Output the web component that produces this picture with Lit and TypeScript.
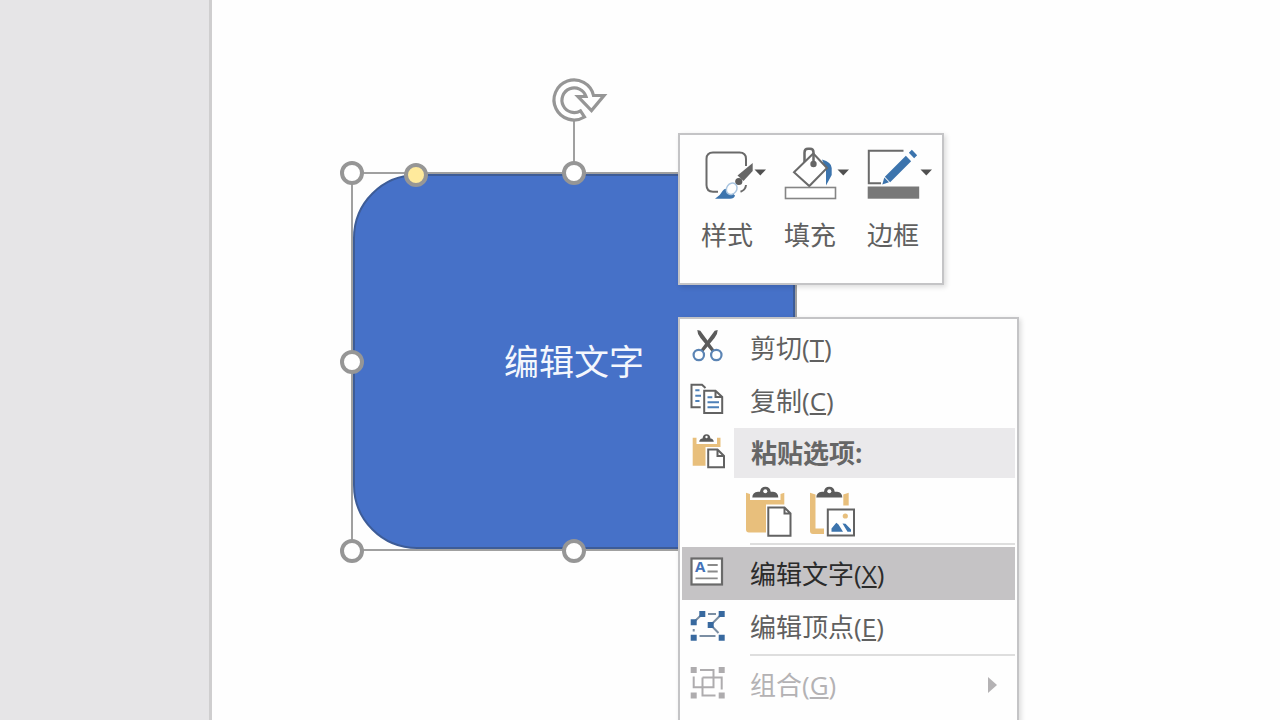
import { LitElement, html, css, svg } from "lit";
import { customElement } from "lit/decorators.js";

const caret = svg`<path d="M53.5 22.5H65L59.3 28.5Z" fill="#505050"/>`;

const styleIcon = html`<svg class="tool-icon" viewBox="0 0 66 54" aria-hidden="true">
  <g fill="none" stroke="#6a6a6a" stroke-width="2">
    <path d="M45 19V12Q45 5.500 38.500 5.500H12Q5.500 5.500 5.500 12V38Q5.500 44.700 12 44.700H17"/>
    <path d="M45 38Q44.500 43 39.500 44.700"/>
  </g>
  <path d="M51.700 16V24L42.500 34L36.500 28.500Z" fill="#666"/>
  <circle cx="37.800" cy="34.500" r="3.600" fill="#5c5c5c"/>
  <path d="M14 51.700Q19 49 21.500 44Q23.500 41 27 42L34 48.500Q33 51.700 29 51.700Z" fill="#3c74ad"/>
  <ellipse cx="30.700" cy="41.800" rx="5" ry="6" transform="rotate(35 30.700 41.800)" fill="#fff" stroke="#a9c5e0" stroke-width="1.500"/>
  ${caret}
</svg>`;

const fillIcon = html`<svg class="tool-icon" viewBox="0 0 66 54" aria-hidden="true">
  <path d="M38 12.500Q47.500 15 47.700 21V28L42 38.500V23Z" fill="#3c74ad"/>
  <path d="M10 25.300L29.300 6.500L43 21L25.300 39Z" fill="#fff" stroke="#6a6a6a" stroke-width="2"/>
  <path d="M20.500 15V5.500Q20.500 1.800 24 1.800H26Q29.500 1.800 29.500 5.500V16" fill="none" stroke="#6a6a6a" stroke-width="2.500"/>
  <circle cx="29.500" cy="17" r="3.200" fill="#666"/>
  <rect x="1.500" y="40.500" width="50" height="11" fill="#fff" stroke="#858585" stroke-width="1.600"/>
  ${caret}
</svg>`;

const borderIcon = html`<svg class="tool-icon" viewBox="0 0 66 54" aria-hidden="true">
  <path d="M36.500 3.700H1.800V36.200H14" fill="none" stroke="#6a6a6a" stroke-width="2"/>
  <rect x="0.700" y="39.500" width="51.500" height="12.200" fill="#787878"/>
  <path d="M15.300 37.500L17.300 30.500L22 35.200Z" fill="#3c74ad"/>
  <path d="M20.500 32.500L41.500 11.500M44.500 8.500L47.500 5.500" stroke="#3c74ad" stroke-width="7.500" fill="none"/>
  ${caret}
</svg>`;

const cutIcon = html`<svg class="icon" viewBox="0 0 36 36" aria-hidden="true">
  <g fill="#5b5b5b">
    <path d="M7.300 0Q7.300 4.500 10.500 8L22 22L24.500 20L10.300 0.800Z"/>
    <path d="M27.700 0Q27.700 4.500 24.500 8L13 22L10.500 20L24.700 0.800Z"/>
  </g>
  <g fill="#fff" stroke="#5b84b4" stroke-width="2.200"><circle cx="8.800" cy="25" r="5.200"/><circle cx="26.300" cy="25" r="5.200"/></g>
</svg>`;

const copyIcon = html`<svg class="icon" viewBox="0 0 36 36" aria-hidden="true">
  <g fill="none" stroke="#626262" stroke-width="2">
    <path d="M10.700 24.300H1.500V1.800H12L15.500 5"/>
    <path d="M14.200 7.800H25.500L32.200 14V30H14.200ZM25.500 7.800V14H32.200" fill="#fff"/>
  </g>
  <path d="M5.300 7.300H9.500M5.300 12.700H11M5.300 18H9.500M17.500 14.300H22.300M17.500 19.300H29M17.500 24.300H29" stroke="#4d80b8" stroke-width="2"/>
</svg>`;

const pasteIcon = html`<svg class="icon" viewBox="0 0 36 36" aria-hidden="true">
  <path d="M2.700 2.700H6.500V9H27V2.700H30.500V12H15.500V30.700H2.700Z" fill="#e8bf7c"/>
  <path d="M9.200 6.800Q9.500 3.800 12.500 3.500Q13 -0.800 16.500 -0.800Q20 -0.800 20.500 3.500Q23.500 3.800 23.800 6.800Z" fill="#5b5b5b"/>
  <circle cx="16.500" cy="2" r="1.200" fill="#fff"/>
  <path d="M18.200 14.500H27.500L34 21V32.300H18.200ZM27.500 14.500V21H34" fill="#fff" stroke="#626262" stroke-width="2"/>
</svg>`;

const clip = svg`
  <path d="M7.300 11.500Q7.300 6.200 13 5.700H15Q15.500 0.800 20.300 0.800Q25 0.800 25.700 5.700H28Q33.300 6.200 33.300 11.500Z" fill="#5b5b5b"/>
  <circle cx="20.300" cy="5.200" r="2" fill="#fff"/>`;

const pasteThemeIcon = html`<svg class="paste-icon" viewBox="0 0 48 52" aria-hidden="true">
  <path d="M1 6.700L5 8V14H35.500V8L39.300 6.700V18.500H21V46.500H4Q1 46.500 1 43.500Z" fill="#e8bf7c"/>
  ${clip}
  <path d="M23.300 21.500H39.500L45.500 27.500V49.800H23.300ZM39.500 21.500V27.500H45.500" fill="#fff" stroke="#626262" stroke-width="2"/>
</svg>`;

const pastePictureIcon = html`<svg class="paste-icon" viewBox="0 0 48 52" aria-hidden="true">
  <path d="M1 6.700L6.500 8.500V42.500H15V48H4Q1 48 1 45ZM34.300 8.500L39.700 6.700V19.500H34.300Z" fill="#e8bf7c"/>
  ${clip}
  <rect x="18.800" y="23.500" width="26.200" height="26" fill="#fff" stroke="#626262" stroke-width="2"/>
  <circle cx="36.300" cy="30" r="2.600" fill="#e8bf7c"/>
  <path d="M22.500 45.800V42.500L27.300 36.700L29.500 38.500L34 45.800ZM33.500 37.500L36.500 37.800L42 43.500V45.800H38.500Z" fill="#3c74ad"/>
</svg>`;

const editTextIcon = html`<svg class="icon" viewBox="0 0 36 36" aria-hidden="true">
  <rect x="1.500" y="2.500" width="30.500" height="26" fill="#fff" stroke="#6a6a6a" stroke-width="2.200"/>
  <text class="glyph" x="5" y="16">A</text>
  <path d="M17.500 9H27.700M17.500 15.500H27.700M5.500 22.300H27.700" stroke="#8a8a8a" stroke-width="1.800"/>
</svg>`;

const pointsIcon = html`<svg class="icon" viewBox="0 0 36 36" aria-hidden="true">
  <path d="M12.300 5L3.700 13.300M18 5H26M31.700 5L20.700 16L28.500 24M9.500 27H25.500M3.700 20V22.500" stroke="#7b8ea3" stroke-width="2" fill="none"/>
  <path d="M9.300 2h6v6h-6zM28.700 2h6v6h-6zM0.700 10.300h6v6h-6zM17.700 13h6v6h-6zM0.700 25.700h6v6h-6zM28.700 25.700h6v6h-6z" fill="#38699f"/>
</svg>`;

const groupIcon = html`<svg class="icon" viewBox="0 0 36 36" aria-hidden="true">
  <path d="M10 3H23.500V20.300H3.700V9.500M12.500 10.500H31.700V22.500M12.500 10.500V28.500H25.500" stroke="#aeacae" stroke-width="2" fill="none"/>
  <path d="M0.700 0h6v6h-6zM28.700 0h6v6h-6zM0.700 25.500h6v6h-6zM28.700 25.500h6v6h-6z" fill="#aeacae"/>
</svg>`;

@customElement("selected-shape")
class SelectedShape extends LitElement {
  static styles = css`
    :host { display: block; position: relative; }
    .frame { box-sizing: border-box; width: 100%; height: 100%; border: 2px solid #a0a0a0; }
    .shape {
      box-sizing: border-box; width: 100%; height: 100%;
      display: flex; align-items: center; justify-content: center;
      border: 2px solid #3d5c97; border-radius: 64px; background: #4671c8;
      color: #f4f7fd; font-size: 35px; line-height: 48px;
    }
    .handle {
      position: absolute; box-sizing: border-box; width: 24px; height: 24px;
      border: 4px solid #969696; border-radius: 50%; background: #fff;
      transform: translate(-50%, -50%);
    }
    .west { left: 1px; }
    .center { left: 50%; }
    .east { left: 100%; }
    .north { top: 1px; }
    .middle { top: 50%; }
    .south { top: 100%; }
    .adjust { left: 65px; top: 3px; background: #ffea9c; }
    .stem { position: absolute; left: 50%; bottom: 100%; width: 2px; height: 52px; margin-left: -1px; background: #a0a0a0; }
    .rotate { position: absolute; left: 50%; top: -97px; width: 60px; height: 50px; margin-left: -24px; }
  `;
  render() {
    const spots = ["west north", "center north", "east north", "west middle", "east middle", "west south", "center south", "east south"];
    return html`
      <div class="frame"><div class="shape">编辑文字</div></div>
      <span class="stem"></span>
      <svg class="rotate" viewBox="-24 -25 60 50" aria-hidden="true">
        <path d="M10.500 17A20 20 0 1 1 19.500 -4.500H30L17.500 10.500L4 -3.500H12A12.300 12.300 0 1 0 6.500 10.800Z"
          fill="#fff" stroke="#969696" stroke-width="3.200"/>
      </svg>
      ${spots.map((s) => html`<span class="handle ${s}"></span>`)}
      <span class="handle adjust"></span>`;
  }
}

@customElement("mini-toolbar")
class MiniToolbar extends LitElement {
  static styles = css`
    :host {
      box-sizing: border-box; display: flex; gap: 17px; padding: 12px 9px 30px 21px;
      border: 2px solid #c4c4c6; background: #fefefe; box-shadow: 2px 2px 5px rgba(0, 0, 0, 0.14);
    }
    .tool {
      display: flex; flex-direction: column; align-items: flex-start; gap: 16px;
      margin: 0; padding: 0; border: 0; background: none;
      font: inherit; font-size: 26px; line-height: 36px; color: #606060;
    }
    .tool-icon { display: block; width: 66px; height: 54px; }
  `;
  render() {
    const tools = [
      { label: "样式", icon: styleIcon },
      { label: "填充", icon: fillIcon },
      { label: "边框", icon: borderIcon },
    ];
    return tools.map((t) => html`<button class="tool" type="button">${t.icon}<span>${t.label}</span></button>`);
  }
}

@customElement("context-menu")
class ContextMenu extends LitElement {
  static styles = css`
    :host {
      box-sizing: border-box; display: flex; flex-direction: column; padding: 2px 2px 16px;
      border: 2px solid #c4c4c6; background: #fefefe; box-shadow: 2px 2px 5px rgba(0, 0, 0, 0.14);
    }
    .item {
      display: flex; align-items: center; gap: 24px; height: 53px; margin: 0; padding: 0 18px 0 8px;
      border: 0; background: none; text-align: left;
      font: inherit; font-size: 26px; line-height: 36px; color: #606060;
    }
    .item.active { background: #c5c3c5; color: #2b2b2b; }
    .item:disabled { color: #b4b2b4; }
    .label { flex: 1; }
    .key { text-decoration: underline; text-decoration-thickness: 2px; text-underline-offset: 2px; }
    .icon { display: block; flex: none; width: 36px; height: 36px; overflow: visible; }
    .glyph { font: bold 15px "Open Sans", sans-serif; fill: #4472b8; }
    .heading { display: flex; align-items: center; gap: 8px; margin-top: 1px; padding-left: 8px; }
    .title {
      flex: 1; margin: 0; padding: 7px 17px; background: #eae9eb;
      font-size: 26px; line-height: 36px; font-weight: 700; color: #666;
    }
    .options { display: flex; gap: 16px; padding: 8px 63px 5px; }
    .option { margin: 0; padding: 0; border: 0; background: none; }
    .paste-icon { display: block; width: 48px; height: 52px; }
    .separator { height: 2px; margin: 0 0 2px 68px; border: 0; background: #dedede; }
    .item + .separator { margin-top: 1px; }
    .arrow { width: 9px; height: 16px; }
  `;
  private item(label: string, key: string, icon: unknown, active = false) {
    return html`<button class="item ${active ? "active" : ""}" type="button" role="menuitem">
      ${icon}<span class="label">${label}(<span class="key">${key}</span>)</span>
    </button>`;
  }
  render() {
    return html`
      ${this.item("剪切", "T", cutIcon)}
      ${this.item("复制", "C", copyIcon)}
      <div class="heading">${pasteIcon}<h2 class="title">粘贴选项:</h2></div>
      <div class="options">
        <button class="option" type="button" aria-label="使用目标主题">${pasteThemeIcon}</button>
        <button class="option" type="button" aria-label="图片">${pastePictureIcon}</button>
      </div>
      <hr class="separator" />
      ${this.item("编辑文字", "X", editTextIcon, true)}
      ${this.item("编辑顶点", "E", pointsIcon)}
      <hr class="separator" />
      <button class="item" type="button" role="menuitem" disabled>
        ${groupIcon}<span class="label">组合(<span class="key">G</span>)</span>
        <svg class="arrow" viewBox="0 0 9 16" aria-hidden="true"><path d="M0 0L9 8L0 16Z" fill="#b4b2b4"/></svg>
      </button>`;
  }
}

@customElement("app-root")
class AppRoot extends LitElement {
  static styles = css`
    :host {
      display: flex; min-height: 100vh; max-height: 100vh; overflow: hidden;
      font-family: "Open Sans", "Noto Sans CJK SC", sans-serif; background: #fefefe;
    }
    .rail { box-sizing: border-box; flex: none; width: 212px; background: #e6e5e7; border-right: 3px solid #cfcecf; }
    .canvas { position: relative; flex: 1; overflow: hidden; }
    .node { position: absolute; left: 139px; top: 172px; width: 446px; height: 379px; }
    .toolbar { position: absolute; left: 466px; top: 133px; }
    .menu { position: absolute; left: 466px; top: 317px; width: 341px; }
  `;
  render() {
    return html`
      <aside class="rail"></aside>
      <main class="canvas">
        <selected-shape class="node"></selected-shape>
        <mini-toolbar class="toolbar"></mini-toolbar>
        <context-menu class="menu" role="menu"></context-menu>
      </main>`;
  }
}
